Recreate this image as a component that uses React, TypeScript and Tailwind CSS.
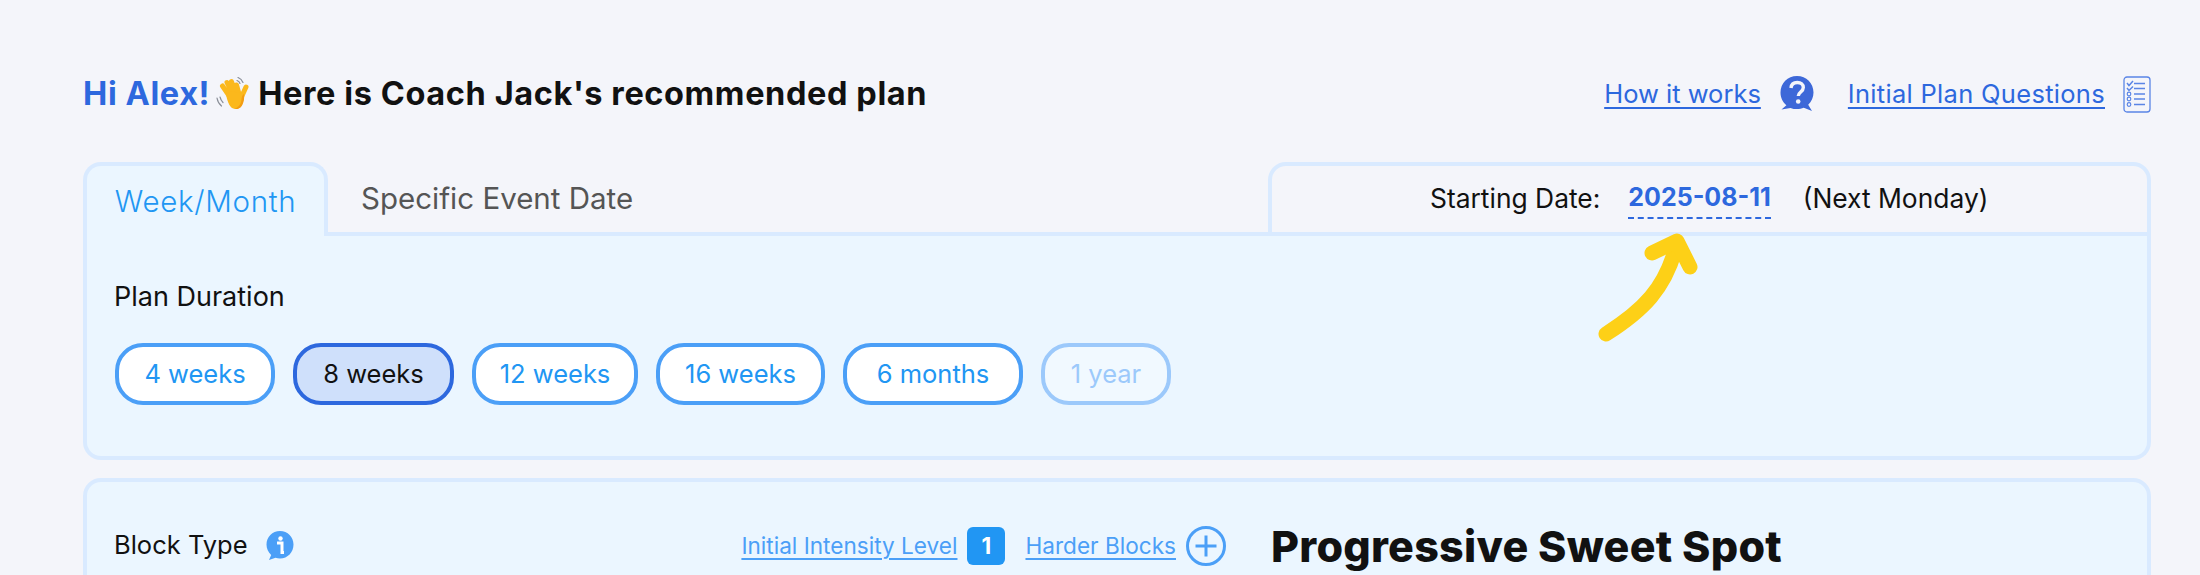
import React from 'react'

const durations = [
  { label: '4 weeks', w: 'w-[160px]' },
  { label: '8 weeks', w: 'w-[161px]', selected: true },
  { label: '12 weeks', w: 'w-[166px]' },
  { label: '16 weeks', w: 'w-[169px]' },
  { label: '6 months', w: 'w-[180px]' },
  { label: '1 year', w: 'w-[130px]', disabled: true },
]

const WaveIcon = () => (
  <svg width="38" height="34" viewBox="0 0 38 34" className="mx-[5px] shrink-0">
    <g fill="none" stroke="#8a8f98" strokeWidth="1.200" strokeLinecap="round">
      <path d="M2 21c.5 3 2 6 4.500 8M5 20c.5 2 1.500 4 3 5.500" />
      <path d="M23 .5c2.500 1 4 2.500 5 5M22 3.500c1.500.6 2.500 1.500 3 3" />
    </g>
    <g stroke="#fbb81c" strokeWidth="5" strokeLinecap="round" fill="none">
      <path d="M15 20L7.500 9M18 18L12 5.500M21 17L16.500 4.500M24 17L21.500 8" />
      <path d="M26 21l5-11" />
    </g>
    <path d="M11 17l6-3 11 3c1 4 .5 8-1 11-2 4-6 5-10 3-3-2-5-8-6-14z" fill="#fbb81c" />
    <path d="M29 17c.5 4 0 8-2 11.500-1.800 3-5 4-8 3.500 4-1 7-4.500 7.500-9.500.2-2 .5-4.500 2.500-5.500z" fill="#f39c12" />
  </svg>
)

const QuestionIcon = () => (
  <svg width="36" height="38" viewBox="0 0 36 38" className="shrink-0">
    <path
      d="M18 1C8.600 1 1.500 8.400 1.500 17.500c0 5.200 2.300 9.800 5.900 12.800L2.500 34.500l9-1.600c2 .8 4.200 1.200 6.500 1.200s4.700-.5 6.800-1.400l8.200 3.300-3.800-6.300c3.300-3 5.300-7.400 5.300-12.200C34.500 8.400 27.400 1 18 1z"
      fill="#3d68d8"
    />
    <path d="M12 13c.3-3.500 2.800-5.500 6.300-5.500 3.600 0 6 2 6 5 0 4.500-5 4.500-5 8.500" fill="none" stroke="#f4f5fa" strokeWidth="3.400" />
    <circle cx="19.200" cy="26.500" r="2.300" fill="#f4f5fa" />
  </svg>
)

const ChecklistIcon = () => (
  <svg width="28" height="37" viewBox="0 0 28 37" fill="none" stroke="#5a85e6" className="shrink-0">
    <rect x="1" y="1" width="26" height="35" rx="3" strokeWidth="1.300" />
    <path d="M11 7.500h11M11 12.500h11M11 18h11M11 23h11M11 28.500h11" strokeWidth="1.500" />
    <path d="M4 7l2 2.500L10 5M4 12l2 2.500 4-4" strokeWidth="1.500" />
    <circle cx="6" cy="18" r="1.800" strokeWidth="1.200" />
    <circle cx="6" cy="23" r="1.800" strokeWidth="1.200" />
    <circle cx="6" cy="28.500" r="1.800" strokeWidth="1.200" />
  </svg>
)

const InfoIcon = () => (
  <svg width="28" height="30" viewBox="0 0 28 30" className="shrink-0">
    <path d="M14 0C6.300 0 .5 6 .5 13.500c0 4.200 1.800 7.900 4.700 10.400L3 29l6.500-2.200c1.400.4 2.900.7 4.500.7 7.700 0 13.500-6.300 13.500-14C27.500 6 21.700 0 14 0z" fill="#4b9ff7" />
    <circle cx="14.500" cy="7.500" r="2.200" fill="#fff" />
    <path d="M11 12h5v9.500h2" fill="none" stroke="#fff" strokeWidth="3" />
  </svg>
)

const PlusIcon = () => (
  <svg width="40" height="40" viewBox="0 0 40 40" fill="none" stroke="#4b9ff7" strokeWidth="3" className="shrink-0">
    <circle cx="20" cy="20" r="18.500" />
    <path d="M20 9.500v21M9.500 20h21" />
  </svg>
)

const ArrowMark = () => (
  <svg width="110" height="125" viewBox="0 0 110 125" fill="none" stroke="#fdd017" strokeWidth="15" strokeLinecap="round" strokeLinejoin="round" className="absolute left-[1590px] top-[225px]">
    <path d="M16 109C52 86 76 64 87 18" />
    <path d="M62 28L87 16L100 42" />
  </svg>
)

export default function App() {
  return (
    <div className="relative h-[575px] overflow-hidden bg-[#f4f5fa] pl-[83px] pr-[49px] pt-[70px] font-['Inter','Liberation_Sans',sans-serif] text-[#111]">
      <header className="flex h-[48px] items-center justify-between">
        <h1 className="flex items-center text-[32.500px] font-bold tracking-[0.6px]">
          <span className="text-[#2d68de]">Hi Alex!</span>
          <WaveIcon />
          <span>Here is Coach Jack's recommended plan</span>
        </h1>
        <div className="flex items-center text-[25.500px] text-[#2d68de]">
          <a className="underline underline-offset-4">How it works</a>
          <span className="ml-[18px] mr-[33px]"><QuestionIcon /></span>
          <a className="tracking-[0.3px] underline underline-offset-4">Initial Plan Questions</a>
          <span className="ml-[18px]"><ChecklistIcon /></span>
        </div>
      </header>

      <section className="mt-[44px]">
        <div className="flex h-[74px]">
          <div className="flex w-[245px] items-center justify-center rounded-t-[18px] border-4 border-b-0 border-[#d9eaff] bg-[#ebf6ff] text-[29.500px] font-light tracking-[0.7px] text-[#2196f3]">
            Week/Month
          </div>
          <div className="flex w-[940px] items-center border-b-4 border-[#d9eaff] pl-[33px] pt-[3px] text-[29.500px] text-[#555]">
            Specific Event Date
          </div>
          <div className="flex flex-1 items-center rounded-t-[18px] border-4 border-[#d9eaff] pl-[158px] text-[26.400px]">
            <span>Starting Date:</span>
            <span className="ml-[28px] border-b-2 border-dashed border-[#2d68de] pb-[1px] text-[25px] font-bold text-[#2d68de]">2025-08-11</span>
            <span className="ml-[32px]">(Next Monday)</span>
          </div>
        </div>
        <div className="h-[224px] rounded-b-[18px] border-4 border-t-0 border-[#d9eaff] bg-[#ebf6ff] pl-[28px] pt-[45px]">
          <div className="-ml-px text-[27px] leading-[32px]">Plan Duration</div>
          <div className="mt-[30px] flex gap-[18px]">
            {durations.map((d) => (
              <div
                key={d.label}
                className={`flex h-[62px] items-center justify-center rounded-[28px] border-4 text-[25.500px] ${d.w} ${
                  d.selected
                    ? 'border-[#2d68de] bg-[#cfe0fb] text-[#111]'
                    : d.disabled
                      ? 'border-[#9cc9fb] bg-white/30 text-[#9cc9fb]'
                      : 'border-[#4b9ff7] bg-white text-[#2196f3]'
                }`}
              >
                {d.label}
              </div>
            ))}
          </div>
        </div>
      </section>

      <section className="mt-[18px] flex h-[200px] rounded-t-[18px] border-4 border-[#d9eaff] bg-[#ebf6ff] pl-[28px] pt-[41px]">
        <div className="flex h-[46px] w-[1111px] items-center">
          <span className="-ml-px -mt-[2px] text-[25.500px]">Block Type</span>
          <span className="ml-[18px]"><InfoIcon /></span>
          <div className="ml-auto flex items-center text-[22.600px] text-[#4b9ff7]">
            <a className="underline underline-offset-4">Initial Intensity Level</a>
            <span className="ml-[10px] flex h-[38px] w-[38px] items-center justify-center rounded-[6px] bg-[#2196f3] font-bold text-white">1</span>
            <a className="ml-[20px] underline underline-offset-4">Harder Blocks</a>
            <span className="ml-[10px]"><PlusIcon /></span>
          </div>
        </div>
        <h2 className="ml-[45px] text-[43px] font-extrabold leading-[46px] tracking-[0.25px]">Progressive Sweet Spot</h2>
      </section>

      <ArrowMark />
    </div>
  )
}
